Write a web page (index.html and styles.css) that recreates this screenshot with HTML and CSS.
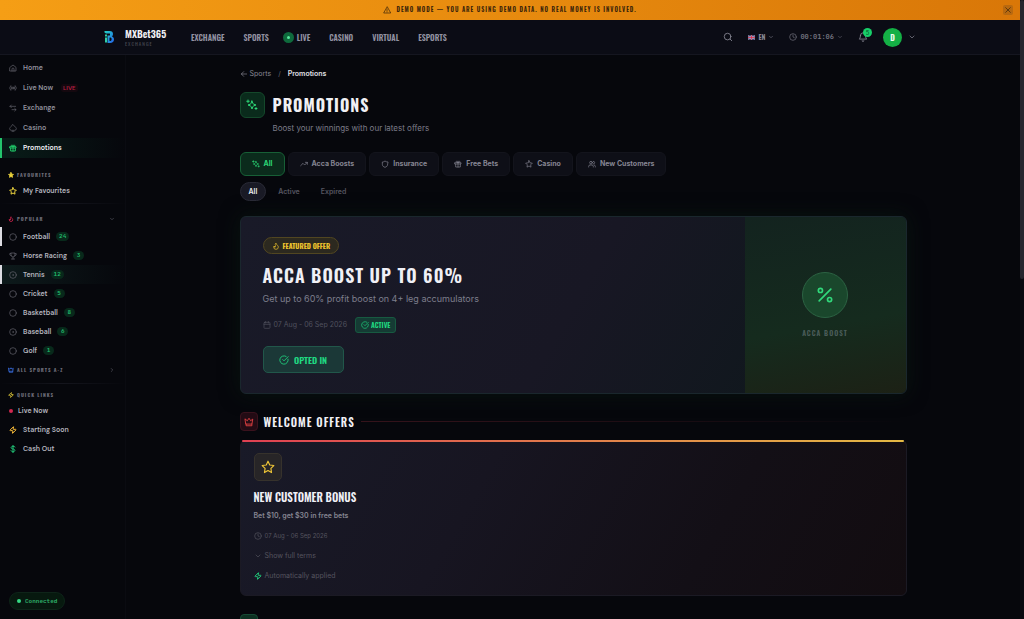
FILE: index.html
```
<!DOCTYPE html>
<html lang="en">
<head>
    <meta charset="UTF-8">
    <meta name="viewport" content="width=device-width, initial-scale=1.0">
    <title>MXBet365 - Promotions</title>
    <link rel="stylesheet" href="styles.css">
</head>
<body>
    <!-- Icon set -->
    <svg class="sprite" aria-hidden="true">
        <symbol id="i-warn" viewBox="0 0 24 24"><path d="M12 3 2 21h20z M12 9v5 M12 17v1"/></symbol>
        <symbol id="i-x" viewBox="0 0 24 24"><path d="M5 5l14 14 M19 5 5 19"/></symbol>
        <symbol id="i-search" viewBox="0 0 24 24"><circle cx="11" cy="11" r="8"/><path d="m21 21-4-4"/></symbol>
        <symbol id="i-down" viewBox="0 0 24 24"><path d="m6 9 6 6 6-6"/></symbol>
        <symbol id="i-right" viewBox="0 0 24 24"><path d="m9 6 6 6-6 6"/></symbol>
        <symbol id="i-left" viewBox="0 0 24 24"><path d="M20 12H4 M11 5l-7 7 7 7"/></symbol>
        <symbol id="i-clock" viewBox="0 0 24 24"><circle cx="12" cy="12" r="10"/><path d="M12 6v6l4 2"/></symbol>
        <symbol id="i-bell" viewBox="0 0 24 24"><path d="M6 8a6 6 0 0 1 12 0c0 7 3 9 3 9H3s3-2 3-9 M10 21a2 2 0 0 0 4 0"/></symbol>
        <symbol id="i-home" viewBox="0 0 24 24"><path d="m3 10 9-7 9 7v11H3z M9 21v-6a3 3 0 0 1 6 0v6"/></symbol>
        <symbol id="i-radio" viewBox="0 0 24 24"><circle cx="12" cy="12" r="2"/><path d="M5 19a10 10 0 0 1 0-14 M8 16a6 6 0 0 1 0-8 M16 8a6 6 0 0 1 0 8 M19 5a10 10 0 0 1 0 14"/></symbol>
        <symbol id="i-swap" viewBox="0 0 24 24"><path d="m7 3-4 4 4 4 M3 7h17 M17 13l4 4-4 4 M21 17H9"/></symbol>
        <symbol id="i-spade" viewBox="0 0 24 24"><path d="M5 9c-2 2-3 3-3 5a5 5 0 0 0 5 5h10a5 5 0 0 0 5-5c0-2-1-3-3-5l-7-7z M9 22h6"/></symbol>
        <symbol id="i-gift" viewBox="0 0 24 24"><path d="M3 8h18v4H3z M5 12v9h14v-9 M12 8v13 M12 8C9 8 6 7 7 4c2-3 5 0 5 4 0-4 3-7 5-4 1 3-2 4-5 4"/></symbol>
        <symbol id="i-star" viewBox="0 0 24 24"><path d="m12 2 3 6.500 7 1-5 5 1 7-6-3.500-6 3.500 1-7-5-5 7-1z"/></symbol>
        <symbol id="i-flame" viewBox="0 0 24 24"><path d="M8.500 14.500A2.500 2.500 0 0 0 11 12c0-1.400-.5-2-1-3-1-2-.2-4 2-6 .5 2.500 2 5 4 6.500s3 3.500 3 5.500a7 7 0 1 1-14 0c0-1.200.4-2.300 1-3a2.500 2.500 0 0 0 2.500 2.500z"/></symbol>
        <symbol id="i-circle" viewBox="0 0 24 24"><circle cx="12" cy="12" r="10"/></symbol>
        <symbol id="i-target" viewBox="0 0 24 24"><circle cx="12" cy="12" r="10"/><circle cx="12" cy="12" r="1"/></symbol>
        <symbol id="i-trophy" viewBox="0 0 24 24"><path d="M6 3h12v6a6 6 0 0 1-12 0z M6 5H2c0 4 1 6 4 6 M18 5h4c0 4-1 6-4 6 M12 15v6 M7 21h10"/></symbol>
        <symbol id="i-crown" viewBox="0 0 24 24"><path d="M3 5l5 4 4-6 4 6 5-4-2 12H5z M5 17v4h14v-4"/></symbol>
        <symbol id="i-zap" viewBox="0 0 24 24"><path d="M4 14a1 1 0 0 1-1-1.600l10-10a.5.5 0 0 1 1 .5L12 9a1 1 0 0 0 1 1h7a1 1 0 0 1 1 1.600l-10 10a.5.5 0 0 1-1-.5l2-6a1 1 0 0 0-1-1z"/></symbol>
        <symbol id="i-dollar" viewBox="0 0 24 24"><path d="M12 1v22 M18 6c-1-1-3-2-6-2-8 0-7 8 0 8s8 8 0 8c-3 0-5-1-6-3"/></symbol>
        <symbol id="i-sparkles" viewBox="0 0 24 24"><path d="M12 4l1.800 4.800a2 2 0 0 0 1.400 1.400L20 12l-4.800 1.800a2 2 0 0 0-1.400 1.400L12 20l-1.800-4.800a2 2 0 0 0-1.400-1.400L4 12l4.800-1.800a2 2 0 0 0 1.400-1.400z M4 2v5 M1.500 4.500h5 M20 17v4 M18 19h4"/></symbol>
        <symbol id="i-trend" viewBox="0 0 24 24"><path d="m2 17 7-7 5 5 8-8 M16 7h6v6"/></symbol>
        <symbol id="i-shield" viewBox="0 0 24 24"><path d="M20 13c0 5-3.500 7.500-8 9-4.500-1.500-8-4-8-9V6c3 0 5.500-1 8-3 2.500 2 5 3 8 3z"/></symbol>
        <symbol id="i-users" viewBox="0 0 24 24"><circle cx="9" cy="8" r="4"/><path d="M2 21v-2a4 4 0 0 1 4-4h6a4 4 0 0 1 4 4v2 M16 4a4 4 0 0 1 0 8 M22 21v-2a4 4 0 0 0-3-4"/></symbol>
        <symbol id="i-calendar" viewBox="0 0 24 24"><rect x="3" y="4" width="18" height="18" rx="2"/><path d="M8 1v5 M16 1v5 M3 10h18"/></symbol>
        <symbol id="i-check" viewBox="0 0 24 24"><path d="M21.800 10A10 10 0 1 1 17 3.300 M9 11l3 3L22 4"/></symbol>
        <symbol id="i-percent" viewBox="0 0 24 24"><path d="M19 5 5 19"/><circle cx="6.500" cy="6.500" r="2.500"/><circle cx="17.500" cy="17.500" r="2.500"/></symbol>
    </svg>

    <div class="viewport">
        <div class="demo-banner">
            <p><svg class="icon"><use href="#i-warn"/></svg>DEMO MODE — YOU ARE USING DEMO DATA. NO REAL MONEY IS INVOLVED.</p>
            <button class="banner-close" aria-label="Close"><svg class="icon"><use href="#i-x"/></svg></button>
        </div>

        <header class="topbar">
            <div class="topbar-inner">
                <a class="brand" href="#">
                    <svg class="brand-mark" viewBox="0 0 20 24">
                        <defs>
                            <linearGradient id="logo" x1="0" y1="0" x2="1" y2="1">
                                <stop offset="0" stop-color="#22d3c5"/>
                                <stop offset="1" stop-color="#2563eb"/>
                            </linearGradient>
                        </defs>
                        <path fill="url(#logo)" fill-rule="evenodd" d="M1 0h10c5 0 7 2 7 6 0 2-1 4-2 5 3 1 4 3 4 6 0 4-3 7-8 7H7V9h5V5H4L1 3z M11 13v7h2c3 0 3-7 0-7z"/>
                        <path fill="#2fcfa8" d="M2 7h4v4H2z M2 13h4v10H2z"/>
                    </svg>
                    <span class="brand-text"><b>MXBet365</b><small>EXCHANGE</small></span>
                </a>
                <nav class="main-nav">
                    <a href="#">EXCHANGE</a>
                    <a href="#">SPORTS</a>
                    <a class="nav-live" href="#"><i class="live-dot"></i>LIVE</a>
                    <a href="#">CASINO</a>
                    <a href="#">VIRTUAL</a>
                    <a href="#">ESPORTS</a>
                </nav>
                <div class="tools">
                    <button class="tool" aria-label="Search"><svg class="icon icon-10"><use href="#i-search"/></svg></button>
                    <button class="tool lang">
                        <svg class="flag" viewBox="0 0 16 10">
                            <path fill="#4a4f86" d="M0 0h16v10H0z"/>
                            <path stroke="#d9cbd8" stroke-width="1" d="M0 0l16 10M16 0 0 10"/>
                            <path stroke="#e5dfe9" stroke-width="3" d="M8 0v10M0 5h16"/>
                            <path stroke="#d1344f" stroke-width="2" d="M8 0v10M0 5h16"/>
                        </svg>
                        EN <svg class="icon icon-6"><use href="#i-down"/></svg>
                    </button>
                    <button class="tool session"><svg class="icon"><use href="#i-clock"/></svg>00:01:06 <svg class="icon icon-6"><use href="#i-down"/></svg></button>
                    <button class="tool bell" aria-label="Notifications"><svg class="icon icon-10"><use href="#i-bell"/></svg><span class="bell-count">5</span></button>
                    <button class="tool account"><span class="avatar">D</span><svg class="icon"><use href="#i-down"/></svg></button>
                </div>
            </div>
        </header>

        <div class="layout">
            <aside class="sidebar">
                <nav class="side-main">
                    <a href="#"><svg class="icon"><use href="#i-home"/></svg>Home</a>
                    <a href="#"><svg class="icon"><use href="#i-radio"/></svg>Live Now <span class="live-tag">LIVE</span></a>
                    <a href="#"><svg class="icon"><use href="#i-swap"/></svg>Exchange</a>
                    <a href="#"><svg class="icon"><use href="#i-spade"/></svg>Casino</a>
                    <a class="current" href="#"><svg class="icon"><use href="#i-gift"/></svg>Promotions</a>
                </nav>

                <section class="side-group">
                    <h3><svg class="icon icon-6 yellow filled"><use href="#i-star"/></svg>FAVOURITES</h3>
                    <a href="#"><svg class="icon yellow"><use href="#i-star"/></svg>My Favourites</a>
                </section>

                <section class="side-group popular">
                    <h3><svg class="icon icon-6 red"><use href="#i-flame"/></svg>POPULAR<svg class="icon icon-6 end"><use href="#i-down"/></svg></h3>
                    <a class="marked" href="#"><svg class="icon"><use href="#i-circle"/></svg>Football <span class="count">24</span></a>
                    <a href="#"><svg class="icon"><use href="#i-trophy"/></svg>Horse Racing <span class="count">3</span></a>
                    <a class="marked hovered" href="#"><svg class="icon"><use href="#i-target"/></svg>Tennis <span class="count">12</span></a>
                    <a href="#"><svg class="icon"><use href="#i-circle"/></svg>Cricket <span class="count">5</span></a>
                    <a href="#"><svg class="icon"><use href="#i-circle"/></svg>Basketball <span class="count">8</span></a>
                    <a href="#"><svg class="icon"><use href="#i-target"/></svg>Baseball <span class="count">6</span></a>
                    <a href="#"><svg class="icon"><use href="#i-circle"/></svg>Golf <span class="count">1</span></a>
                    <h3 class="all-sports"><svg class="icon icon-6 blue"><use href="#i-crown"/></svg>ALL SPORTS A-Z<svg class="icon icon-6 end"><use href="#i-right"/></svg></h3>
                </section>

                <section class="side-group">
                    <h3><svg class="icon icon-6 yellow"><use href="#i-zap"/></svg>QUICK LINKS</h3>
                    <a class="quick-live" href="#"><i></i>Live Now</a>
                    <a href="#"><svg class="icon amber"><use href="#i-zap"/></svg>Starting Soon</a>
                    <a href="#"><svg class="icon green"><use href="#i-dollar"/></svg>Cash Out</a>
                </section>
            </aside>

            <main>
                <nav class="breadcrumb">
                    <a href="#"><svg class="icon"><use href="#i-left"/></svg>Sports</a>
                    <span>/</span>
                    <b>Promotions</b>
                </nav>

                <div class="page-head">
                    <span class="page-icon"><svg class="icon icon-12"><use href="#i-sparkles"/></svg></span>
                    <div>
                        <h1>PROMOTIONS</h1>
                        <p>Boost your winnings with our latest offers</p>
                    </div>
                </div>

                <div class="tabs">
                    <button class="active"><svg class="icon"><use href="#i-sparkles"/></svg>All</button>
                    <button><svg class="icon"><use href="#i-trend"/></svg>Acca Boosts</button>
                    <button><svg class="icon"><use href="#i-shield"/></svg>Insurance</button>
                    <button><svg class="icon"><use href="#i-gift"/></svg>Free Bets</button>
                    <button><svg class="icon"><use href="#i-star"/></svg>Casino</button>
                    <button><svg class="icon"><use href="#i-users"/></svg>New Customers</button>
                </div>
                <div class="status-tabs">
                    <button class="active">All</button>
                    <button>Active</button>
                    <button>Expired</button>
                </div>

                <article class="featured">
                    <div class="featured-body">
                        <span class="featured-badge"><svg class="icon"><use href="#i-flame"/></svg>FEATURED OFFER</span>
                        <h2>ACCA BOOST UP TO 60%</h2>
                        <p>Get up to 60% profit boost on 4+ leg accumulators</p>
                        <div class="featured-meta">
                            <svg class="icon"><use href="#i-calendar"/></svg>
                            <span>07 Aug - 06 Sep 2026</span>
                            <span class="state"><svg class="icon"><use href="#i-check"/></svg>ACTIVE</span>
                        </div>
                        <button class="opted"><svg class="icon icon-10"><use href="#i-check"/></svg>OPTED IN</button>
                    </div>
                    <div class="featured-side">
                        <span class="percent"><svg class="icon icon-20"><use href="#i-percent"/></svg></span>
                        <span>ACCA BOOST</span>
                    </div>
                </article>

                <section class="offers">
                    <div class="section-head">
                        <span class="section-icon"><svg class="icon icon-10"><use href="#i-crown"/></svg></span>
                        <h2>WELCOME OFFERS</h2>
                        <i class="rule"></i>
                    </div>
                    <article class="offer">
                        <span class="offer-icon"><svg class="icon icon-14"><use href="#i-star"/></svg></span>
                        <h3>NEW CUSTOMER BONUS</h3>
                        <p>Bet $10, get $30 in free bets</p>
                        <div class="offer-date"><svg class="icon"><use href="#i-clock"/></svg>07 Aug - 06 Sep 2026</div>
                        <button class="terms"><svg class="icon"><use href="#i-down"/></svg>Show full terms</button>
                        <div class="auto"><svg class="icon green"><use href="#i-zap"/></svg>Automatically applied</div>
                    </article>
                </section>

                <section class="offers">
                    <div class="section-head">
                        <span class="section-icon next"></span>
                    </div>
                </section>
            </main>
        </div>
    </div>

    <div class="scroll-rail"><i></i></div>
    <div class="connected"><i></i>Connected</div>
</body>
</html>
```
FILE: styles.css
```
* {
    box-sizing: border-box;
}

body {
    margin: 0;
    height: 100vh;
    overflow: hidden;
    display: flex;
    background: #06070c;
    color: #a2a2ae;
    font-family: Inter, "Open Sans", sans-serif;
    font-size: 8px;
    line-height: 12px;
}

h1, h2, h3, p {
    margin: 0;
}

a {
    color: inherit;
    text-decoration: none;
}

button {
    padding: 0;
    border: none;
    background: none;
    color: inherit;
    font: inherit;
    cursor: pointer;
}

h1, h2, h3,
.demo-banner, .brand, .main-nav, .lang, .avatar,
.featured-badge, .state, .opted, .featured-side {
    font-family: Oswald, "Liberation Sans Narrow", "DejaVu Sans Condensed", sans-serif;
    font-weight: 600;
}

/* Icons */
.sprite {
    position: absolute;
    width: 0;
    height: 0;
}

.icon {
    width: 8px;
    height: 8px;
    flex: none;
    fill: none;
    stroke: currentColor;
    stroke-width: 2;
    stroke-linecap: round;
    stroke-linejoin: round;
}

.icon-6 { width: 6px; height: 6px; }
.icon-10 { width: 10px; height: 10px; }
.icon-12 { width: 12px; height: 12px; }
.icon-14 { width: 14px; height: 14px; }
.icon-20 { width: 20px; height: 20px; }

.icon.yellow { color: #eed53e; }
.icon.amber { color: #f5b93a; }
.icon.red { color: #dc2650; }
.icon.blue { color: #3b72e8; }
.icon.green { color: #20c477; }
.icon.yellow, .icon.amber, .icon.blue, .icon.red, .icon.green { stroke-width: 3; }
.icon.filled { fill: currentColor; }

.viewport {
    flex: 1;
    min-width: 0;
}

/* Demo banner */
.demo-banner {
    display: flex;
    align-items: center;
    height: 20px;
    padding: 0 7px;
    background: linear-gradient(90deg, #f59e15, #d97708);
    color: #38220a;
    font-size: 6px;
    letter-spacing: 1px;
}

.demo-banner p {
    flex: 1;
    display: flex;
    align-items: center;
    justify-content: center;
    gap: 5px;
    padding-left: 10px;
}

.banner-close {
    display: flex;
    padding: 1px;
    border-radius: 2px;
    background: #b9690f;
}

/* Top bar */
.topbar {
    height: 35px;
    border-bottom: 1px solid #151620;
    background: #0b0c15;
}

.topbar-inner {
    display: flex;
    align-items: center;
    max-width: 812px;
    height: 100%;
    margin: 0 auto;
}

.brand {
    display: flex;
    align-items: center;
    gap: 11px;
    width: 87px;
}

.brand-mark {
    width: 10px;
    height: 12px;
}

.brand-text {
    display: flex;
    flex-direction: column;
}

.brand b {
    color: #f0f0f4;
    font-size: 10px;
    font-weight: 600;
    line-height: 12px;
}

.brand small {
    color: #484a54;
    font-size: 5px;
    font-weight: 400;
    line-height: 7px;
    letter-spacing: 1px;
}

.main-nav {
    display: flex;
    align-items: center;
    gap: 19px;
    color: #9191a0;
    font-size: 8px;
}

.nav-live {
    display: flex;
    align-items: center;
    gap: 3px;
    margin-left: -5px;
}

.live-dot {
    width: 11px;
    height: 11px;
    border: 4px solid #0e6a3c;
    border-radius: 50%;
    background: #58e89c;
}

.tools {
    display: flex;
    align-items: center;
    gap: 15px;
    margin-left: auto;
    color: #8b8b98;
}

.tool {
    position: relative;
    display: flex;
    align-items: center;
    gap: 3px;
}

.lang {
    font-size: 7px;
}

.flag {
    width: 7px;
    height: 5px;
}

.session {
    font-family: "JetBrains Mono", "Liberation Mono", monospace;
    font-size: 7px;
    font-weight: 700;
    color: #747480;
}

.bell-count {
    position: absolute;
    top: -4px;
    right: -4px;
    width: 9px;
    height: 9px;
    border-radius: 50%;
    background: #17cf69;
    color: #074f2a;
    font-size: 6px;
    line-height: 9px;
}

.avatar {
    width: 19px;
    height: 19px;
    margin-right: 3px;
    border-radius: 50%;
    background: #14b045;
    color: #f0fff4;
    line-height: 19px;
}

/* Columns */
.layout {
    display: flex;
}

.sidebar {
    flex: none;
    width: 126px;
    min-height: calc(100vh - 55px);
    padding-top: 3px;
    border-right: 1px solid #0a0b11;
    font-family: "DM Sans", Inter, sans-serif;
    font-size: 7px;
    font-weight: 600;
}

.sidebar a {
    display: flex;
    align-items: center;
    gap: 6px;
    height: 19px;
    padding-left: 7px;
    border-left: 2px solid transparent;
    color: #b5b5bf;
}

.sidebar .side-main a {
    height: 20px;
    color: #92929e;
}

.sidebar a .icon:not([class*=" "]) {
    color: #666670;
}

.sidebar .side-main .current {
    border-color: #23c46c;
    background: linear-gradient(90deg, #081c18, #06070c);
    color: #f0f0f4;
}

.sidebar .current .icon:not([class*=" "]) {
    color: #20c768;
    stroke-width: 3;
}

.live-tag {
    margin-left: 2px;
    padding: 0 2px;
    border-radius: 2px;
    background: #14080f;
    color: #b51f42;
    font-size: 6px;
    line-height: 8px;
}

.side-group {
    padding: 11px 0 3px;
}

.side-group + .side-group {
    border-top: 1px solid;
    border-image: linear-gradient(90deg, #06070c, #14151d, #06070c) 1;
    padding-top: 5px;
}

.side-group h3 {
    display: flex;
    align-items: center;
    gap: 3px;
    height: 12px;
    padding: 0 10px 0 8px;
    color: #6e6e7a;
    font-size: 5px;
    font-weight: 700;
    letter-spacing: 1px;
}

.side-group .end {
    margin-left: auto;
}

.side-group + .popular {
    padding-top: 7px;
}

.popular h3 {
    height: 16px;
}

.popular .all-sports {
    height: 20px;
}

.sidebar .marked {
    border-color: #dcdce2;
}

.sidebar .hovered {
    background: linear-gradient(90deg, #0d1a1b, #06070c);
}

.count {
    min-width: 11px;
    padding: 0 3px;
    border-radius: 5px;
    background: #08291b;
    color: #22be6f;
    font-family: "JetBrains Mono", "Liberation Mono", monospace;
    font-size: 6px;
    font-weight: 700;
    line-height: 9px;
    text-align: center;
}

.sidebar .quick-live {
    gap: 5px;
}

.quick-live i {
    width: 4px;
    height: 4px;
    border-radius: 50%;
    background: #d12850;
}

/* Main column */
main {
    flex: 1;
    max-width: 667px;
    margin: 0 auto;
    padding-top: 13px;
}

.breadcrumb,
.breadcrumb a {
    display: flex;
    align-items: center;
    font-size: 7px;
}

.breadcrumb {
    gap: 7px;
    color: #646470;
}

.breadcrumb a {
    gap: 2px;
    color: #888894;
}

.breadcrumb b {
    color: #e0e0e6;
    font-weight: 600;
}

.page-head {
    display: flex;
    gap: 8px;
    margin-top: 12px;
}

.page-icon {
    display: grid;
    place-items: center;
    width: 25px;
    height: 26px;
    border: 1px solid #14482b;
    border-radius: 6px;
    background: #0a2b1c;
    color: #2dd777;
}

.page-head h1 {
    color: #f0f0f4;
    font-size: 16px;
    font-weight: 700;
    line-height: 26px;
    letter-spacing: 1px;
}

.page-head p {
    margin-top: 4px;
    color: #7c7c89;
}

.tabs {
    display: flex;
    gap: 3px;
    margin-top: 18px;
}

.tabs button {
    display: flex;
    align-items: center;
    gap: 4px;
    height: 24px;
    padding: 0 11px;
    border: 1px solid #13141c;
    border-radius: 6px;
    background: #0e0f17;
    color: #858592;
    font-size: 7px;
    font-weight: 700;
}

.tabs .active {
    border-color: #175f36;
    background: #0b2b1c;
    color: #2bd576;
}

.status-tabs {
    display: flex;
    gap: 3px;
    margin-top: 6px;
}

.status-tabs button {
    height: 19px;
    padding: 0 8px;
    border: 1px solid transparent;
    border-radius: 10px;
    color: #555560;
    font-size: 7px;
    font-weight: 600;
}

.status-tabs .active {
    border-color: #292a36;
    background: #191a25;
    color: #f0f0f4;
}

/* Featured promotion */
.featured {
    display: flex;
    height: 178px;
    margin-top: 15px;
    overflow: hidden;
    border: 1px solid #1a272d;
    border-radius: 6px;
    background: linear-gradient(120deg, #191a28 0%, #181724 50%, #0c181a 100%);
    box-shadow: 0 0 20px #08140f;
}

.featured-body {
    flex: 1;
    padding: 20px 22px;
}

.featured-badge {
    display: inline-flex;
    align-items: center;
    gap: 3px;
    height: 17px;
    padding: 0 8px;
    border: 1px solid #514621;
    border-radius: 9px;
    background: #2c291f;
    color: #f0c62e;
    font-size: 7px;
    font-weight: 700;
}

.featured h2 {
    margin-top: 8px;
    color: #f0f0f6;
    font-size: 18px;
    line-height: 27px;
    letter-spacing: 1px;
}

.featured p {
    margin-top: 4px;
    color: #7d7e8c;
    font-size: 9px;
}

.featured-meta {
    display: flex;
    align-items: center;
    gap: 3px;
    margin-top: 12px;
    color: #50515e;
    font-size: 7px;
}

.state {
    display: flex;
    align-items: center;
    gap: 2px;
    height: 16px;
    margin-left: 5px;
    padding: 0 5px;
    border: 1px solid #175a41;
    border-radius: 3px;
    background: #153b34;
    color: #20d982;
}

.opted {
    display: flex;
    align-items: center;
    justify-content: center;
    gap: 5px;
    width: 81px;
    height: 27px;
    margin-top: 13px;
    border: 1px solid #21574a;
    border-radius: 5px;
    background: #1b3837;
    color: #20d982;
    font-size: 9px;
}

.featured-side {
    display: flex;
    flex-direction: column;
    align-items: center;
    justify-content: center;
    gap: 9px;
    width: 161px;
    background: linear-gradient(170deg, #13231f, #152b1e 60%, #1c2115);
    color: #4b5d5a;
    font-size: 7px;
    letter-spacing: 1px;
}

.percent {
    display: grid;
    place-items: center;
    width: 46px;
    height: 46px;
    border: 1px solid #2c6343;
    border-radius: 50%;
    background: #1a472c;
    color: #31d87b;
}

/* Offer sections */
.offers {
    margin-top: 18px;
}

.section-head {
    display: flex;
    align-items: center;
    gap: 6px;
    margin-bottom: 9px;
}

.section-icon {
    display: grid;
    place-items: center;
    width: 18px;
    height: 19px;
    border: 1px solid #3b121d;
    border-radius: 4px;
    background: #230b14;
    color: #ee4444;
}

.section-icon.next {
    border-color: #164a34;
    background: #0d3022;
}

.section-head h2 {
    color: #f0f0f4;
    font-size: 11px;
    line-height: 18px;
    letter-spacing: 1px;
}

.rule {
    flex: 1;
    height: 1px;
    background: linear-gradient(90deg, #35131b, #06070c);
}

.offer {
    display: flex;
    flex-direction: column;
    align-items: flex-start;
    height: 156px;
    padding: 12px 13px;
    position: relative;
    border: 1px solid #1b1a24;
    border-radius: 6px;
    background: linear-gradient(120deg, #191a28 0%, #171521 35%, #130f16 70%, #120c10 100%);
}

.offer::before {
    content: "";
    position: absolute;
    top: -1px;
    left: 1px;
    right: 2px;
    height: 2px;
    border-radius: 2px;
    background: linear-gradient(90deg, #df4052, #e4b944);
}

.offer-icon {
    display: grid;
    place-items: center;
    width: 28px;
    height: 28px;
    border: 1px solid #36322c;
    border-radius: 5px;
    background: #272527;
    color: #efc637;
}

.offer h3 {
    margin-top: 8px;
    color: #f0f0f6;
    font-size: 11px;
    line-height: 16px;
}

.offer p {
    margin-top: 5px;
    color: #868692;
    font-size: 7px;
    font-weight: 600;
}

.offer-date,
.terms,
.auto {
    display: flex;
    align-items: center;
    gap: 3px;
    margin-top: 8px;
    color: #55545f;
    font-size: 7px;
    line-height: 12px;
}

.offer-date {
    font-size: 6px;
}

/* Scroll rail and connection state */
.scroll-rail {
    flex: none;
    width: 4px;
    background: #090a10;
}

.scroll-rail i {
    display: block;
    height: 45vh;
    border-radius: 2px;
    background: #25262e;
}

.connected {
    position: fixed;
    left: 9px;
    bottom: 9px;
    display: flex;
    align-items: center;
    gap: 4px;
    height: 18px;
    padding: 0 7px;
    border: 1px solid #0e2419;
    border-radius: 9px;
    background: #07190f;
    color: #2fb26b;
    font-family: "JetBrains Mono", "Liberation Mono", monospace;
    font-size: 6px;
    font-weight: 700;
}

.connected i {
    width: 4px;
    height: 4px;
    border-radius: 50%;
    background: #35d983;
}
```
